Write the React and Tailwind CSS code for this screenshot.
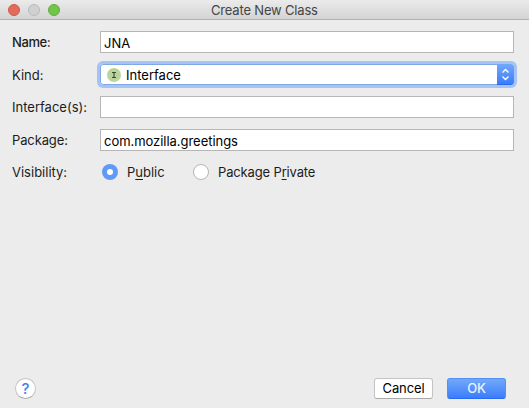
import React from "react";

function Field({ label, value, className = "", labelClass = "" }) {
  return (
    <div className={`flex h-[22px] items-center ${className}`}>
      <label className={`w-[88px] shrink-0 ${labelClass}`}>{label}</label>
      <div className="flex h-[22px] w-[414px] items-center border border-[#b6b6b6] bg-white pt-px pl-[3px] tracking-[-0.04px] text-black">
        {value}
      </div>
    </div>
  );
}

export default function App() {
  return (
    <div className="flex h-[408px] w-[529px] flex-col bg-[#ececec] font-['Inter','Liberation_Sans',sans-serif] text-[13px] leading-[16px] whitespace-nowrap text-[#1c1c1c]">
      <header className="flex h-5 shrink-0 items-center border-b border-[#b1b1b1] bg-linear-to-b from-[#ebebeb] to-[#d4d4d4] pl-2">
        <div className="flex w-[203px] gap-2">
          <span className="size-3 rounded-full border border-[#cf5a4c] bg-[#e26b5c]" />
          <span className="size-3 rounded-full border border-[#bababa] bg-[#d0d0d0]" />
          <span className="size-3 rounded-full border border-[#5eae38] bg-[#72c548]" />
        </div>
        <h1 className="tracking-[-0.18px] text-[#454545]">Create New Class</h1>
      </header>

      <main className="flex flex-1 flex-col pt-[11px] pl-3">
        <Field label="Name:" value="JNA" labelClass="font-medium tracking-[-0.4px]" />
        <div className="mt-[11px] flex h-[21px] items-center">
          <label className="w-[88px] shrink-0">Kind:</label>
          <div className="flex h-[21px] w-[414px] overflow-hidden rounded-[3px] bg-white ring-3 ring-[#a6c3f1]">
            <div className="flex flex-1 items-center rounded-l-[3px] border-y border-l border-[#80a7e6] pl-1.5 text-black">
              <svg width="14" height="14" viewBox="0 0 14 14" className="mr-[5px]">
                <circle cx="7" cy="7" r="7" fill="#b9d59b" />
                <path d="M5 4.5h4M7 4.5v5M5 9.5h4" stroke="#3b4632" strokeWidth="1.1" fill="none" />
              </svg>
              Interface
            </div>
            <div className="flex w-[17px] items-center justify-center border-b border-[#286bf3] bg-linear-to-b from-[#72a8fa] to-[#3c7cfc]">
              <svg width="9" height="13" viewBox="0 0 9 13" fill="none" stroke="white" strokeWidth="1.4">
                <path d="M1.5 4.5l3-3 3 3M1.5 8.5l3 3 3-3" />
              </svg>
            </div>
          </div>
        </div>
        <Field label="Interface(s):" value="" className="mt-[11px]" />
        <Field label="Package:" value="com.mozilla.greetings" className="mt-[11px]" labelClass="tracking-[-0.12px]" />
        <div className="mt-[13px] flex h-4 items-center">
          <span className="w-[90px]">Visibility:</span>
          <span className="flex size-4 items-center justify-center rounded-full bg-[#6299f8]">
            <span className="size-1.5 rounded-full bg-white" />
          </span>
          <span className="w-[75px] pl-[9px]">P<u className="underline-offset-2">u</u>blic</span>
          <span className="size-4 rounded-full border border-[#b4b4b4] bg-white" />
          <span className="pl-[9px] tracking-[-0.15px]">Package P<u className="underline-offset-2">r</u>ivate</span>
        </div>
      </main>

      <footer className="flex h-[30px] shrink-0 items-start pl-[15px]">
        <button className="flex size-[21px] items-center justify-center rounded-full border border-[#c4c4c4] border-b-[#aaaaaa] bg-white text-[15px] font-medium text-[#3d7ff5]">?</button>
        <button className="ml-[338px] h-[21px] w-[59px] rounded-[3px] border border-[#c4c4c4] border-b-[#aaaaaa] bg-white pb-px tracking-[-0.1px] text-black">Cancel</button>
        <button className="ml-3.5 h-[21px] w-[59px] rounded-[3px] border border-[#4f91f7] border-b-[#286bf3] bg-linear-to-b from-[#72a8fa] to-[#3c7cfc] pb-px font-medium tracking-[-0.2px] text-[#e9f1ff]">OK</button>
      </footer>
    </div>
  );
}
